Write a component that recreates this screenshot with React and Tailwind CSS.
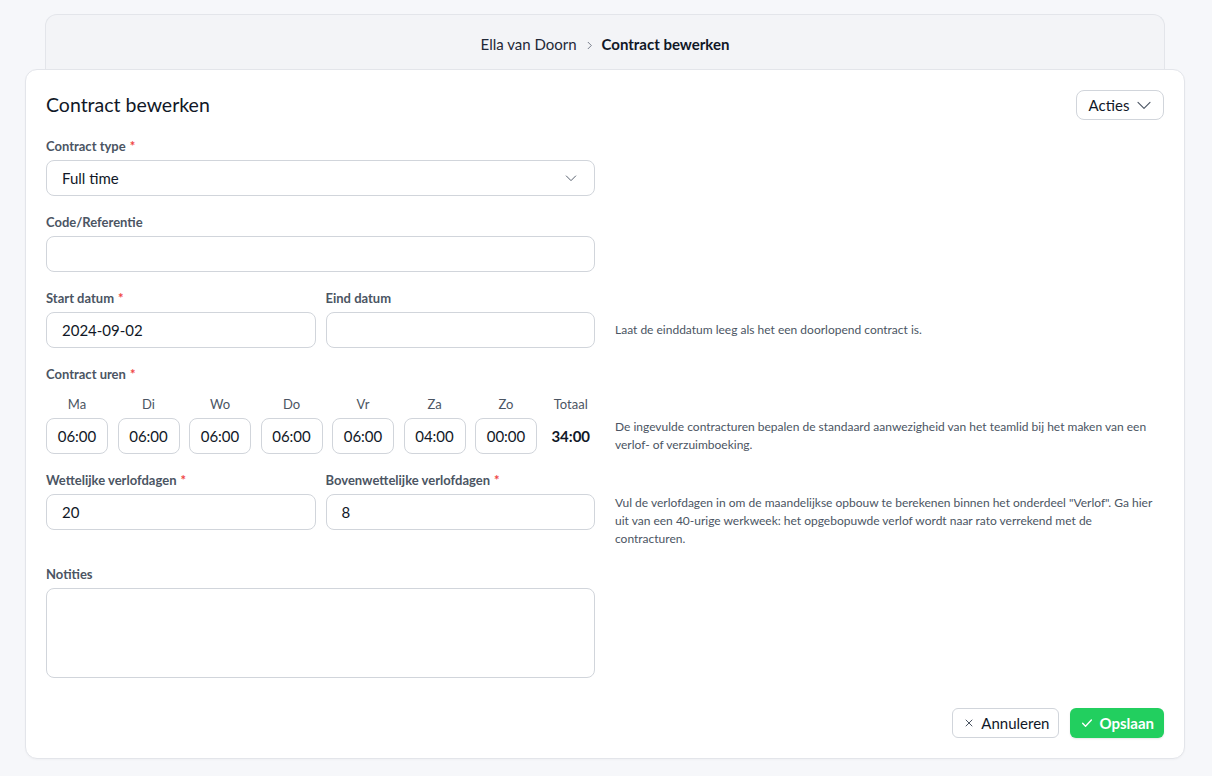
import React from 'react';

const Req = () => <span className="ml-1 text-[#ef4444]">*</span>;

const Label = ({ children, required }) => (
    <div className="mb-[6px] h-4 text-[13px] leading-4 font-bold text-[#4b5563]">
        {children}
        {required && <Req />}
    </div>
);

const Input = ({ value, className = '' }) => (
    <div className={`h-9 rounded-lg border border-[#d1d5db] bg-white px-[15px] flex items-center text-[15px] text-[#111827] ${className}`}>
        {value}
    </div>
);

const Helper = ({ children }) => (
    <div className="min-h-9 flex items-center text-[12px] leading-[18px] text-[#4b5563]">
        <p>{children}</p>
    </div>
);

const Chevron = ({ className, width = 1.6 }) => (
    <svg viewBox="0 0 24 24" fill="none" stroke="currentColor" strokeWidth={width} strokeLinecap="round" strokeLinejoin="round" className={className}>
        <path d="M4 8.5l8 8 8-8" />
    </svg>
);

const days = [
    { d: 'Ma', v: '06:00' },
    { d: 'Di', v: '06:00' },
    { d: 'Wo', v: '06:00' },
    { d: 'Do', v: '06:00' },
    { d: 'Vr', v: '06:00' },
    { d: 'Za', v: '04:00' },
    { d: 'Zo', v: '00:00' },
];

export default function App() {
    return (
        <div className="min-h-[776px] bg-[#f6f7fa] font-['Lato',sans-serif] pt-[14px]">
            {/* Breadcrumb */}
            <div className="ml-[45px] w-[1120px] h-[55px] rounded-t-xl border border-b-0 border-[#e3e5ea] bg-[#f3f4f7] flex items-center justify-center pt-[4px] gap-[7px] text-[15px] text-[#1f2937]">
                <span>Ella van Doorn</span>
                <svg viewBox="0 0 24 24" fill="none" stroke="#6b7280" strokeWidth="2" strokeLinecap="round" strokeLinejoin="round" className="w-[11px] h-[11px] mt-[2px]">
                    <path d="M9 5l7 7-7 7" />
                </svg>
                <span className="font-bold text-[#111827]">Contract bewerken</span>
            </div>

            {/* Main card */}
            <div className="ml-[25px] w-[1160px] rounded-xl border border-[#e3e5ea] bg-white px-5 pt-5 pb-5 shadow-[0_1px_2px_rgba(0,0,0,0.03)]">
                <div className="flex items-center justify-between mb-[18px]">
                    <h1 className="text-[19.5px] text-[#111827]">Contract bewerken</h1>
                    <button className="h-[30px] w-[88px] rounded-lg border border-[#d1d5db] flex items-center justify-center gap-[6px] pl-[2px] text-[15px] text-[#111827]">
                        Acties
                        <Chevron className="w-[18px] h-[18px] text-[#4b5563]" width={1.5} />
                    </button>
                </div>

                <div className="grid grid-cols-2 gap-x-5 gap-y-[18px]">
                    {/* Contract type */}
                    <div>
                        <Label required>Contract type</Label>
                        <div className="h-9 rounded-lg border border-[#d1d5db] px-[15px] flex items-center justify-between text-[15px] text-[#111827]">
                            Full time
                            <Chevron className="w-[14px] h-[14px] text-[#4b5563] mr-[1px]" />
                        </div>
                    </div>
                    <div />

                    {/* Code */}
                    <div>
                        <Label>Code/Referentie</Label>
                        <Input value="" />
                    </div>
                    <div />

                    {/* Dates */}
                    <div className="grid grid-cols-2 gap-x-[10px]">
                        <div>
                            <Label required>Start datum</Label>
                            <Input value="2024-09-02" />
                        </div>
                        <div>
                            <Label>Eind datum</Label>
                            <Input value="" />
                        </div>
                    </div>
                    <div className="pt-[22px]">
                        <Helper>Laat de einddatum leeg als het een doorlopend contract is.</Helper>
                    </div>

                    {/* Contract uren */}
                    <div>
                        <div className="mb-[14px] h-4 text-[13px] leading-4 font-bold text-[#4b5563]">
                            Contract uren<Req />
                        </div>
                        <div className="grid grid-cols-[repeat(7,62px)_1fr] gap-x-[9.5px]">
                            {days.map(x => (
                                <div key={x.d} className="flex flex-col items-center">
                                    <div className="mb-[6px] h-4 text-[13px] leading-4 text-[#4b5563]">{x.d}</div>
                                    <div className="w-full h-9 rounded-lg border border-[#d1d5db] flex items-center justify-center text-[15px] text-[#111827]">
                                        {x.v}
                                    </div>
                                </div>
                            ))}
                            <div className="flex flex-col items-center">
                                <div className="mb-[6px] h-4 text-[13px] leading-4 text-[#4b5563]">Totaal</div>
                                <div className="h-9 flex items-center text-[15px] font-bold text-[#111827]">34:00</div>
                            </div>
                        </div>
                    </div>
                    <div className="pt-[52px]">
                        <Helper>
                            De ingevulde contracturen bepalen de standaard aanwezigheid van het teamlid bij het maken van een verlof- of verzuimboeking.
                        </Helper>
                    </div>

                    {/* Verlofdagen */}
                    <div className="grid grid-cols-2 gap-x-[10px]">
                        <div>
                            <Label required>Wettelijke verlofdagen</Label>
                            <Input value="20" />
                        </div>
                        <div>
                            <Label required>Bovenwettelijke verlofdagen</Label>
                            <Input value="8" />
                        </div>
                    </div>
                    <div className="pt-[22px]">
                        <Helper>
                            Vul de verlofdagen in om de maandelijkse opbouw te berekenen binnen het onderdeel "Verlof". Ga hier uit van een 40-urige werkweek: het opgebopuwde verlof wordt naar rato verrekend met de contracturen.
                        </Helper>
                    </div>

                    {/* Notities */}
                    <div>
                        <Label>Notities</Label>
                        <div className="h-[90px] rounded-lg border border-[#d1d5db]" />
                    </div>
                    <div />
                </div>

                {/* Footer */}
                <div className="mt-[30px] flex justify-end gap-[11px]">
                    <button className="h-[30px] rounded-md border border-[#d1d5db] pl-[10px] pr-[9px] flex items-center gap-[6px] text-[15px] text-[#111827]">
                        <svg viewBox="0 0 24 24" fill="none" stroke="#4b5563" strokeWidth="2" strokeLinecap="round" className="w-3 h-3">
                            <path d="M6 6l12 12M18 6L6 18" />
                        </svg>
                        Annuleren
                    </button>
                    <button className="h-[30px] rounded-md bg-[#22cf5f] px-[10px] flex items-center gap-[5px] text-[15px] font-bold text-white shadow-[0_1px_2px_rgba(0,0,0,0.1)]">
                        <svg viewBox="0 0 24 24" fill="none" stroke="white" strokeWidth="2.4" strokeLinecap="round" strokeLinejoin="round" className="w-[14px] h-[14px]">
                            <path d="M4.5 12.5l5 5L19.5 7" />
                        </svg>
                        Opslaan
                    </button>
                </div>
            </div>
        </div>
    );
}
